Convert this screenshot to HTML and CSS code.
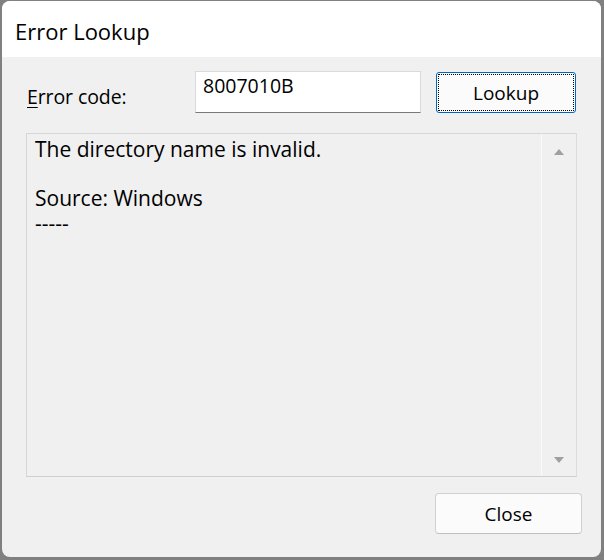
FILE: index.html
```html
<!DOCTYPE html>
<html>
<head>
<meta charset="utf-8">
<link rel="stylesheet" href="styles.css">
</head>
<body>
<div class="window">
  <div class="titlebar">Error Lookup</div>
  <div class="content">
    <div class="row">
      <label class="label"><u>E</u>rror code:</label>
      <div class="input">8007010B</div>
      <button class="btn btn-lookup"><span class="focus">Lookup</span></button>
    </div>
    <div class="output">
      <div class="text">
        <div class="line">The directory name is invalid.</div>
        <div class="line"></div>
        <div class="line">Source: Windows</div>
        <div class="line">-----</div>
      </div>
      <div class="scrollbar">
        <svg class="arrow" width="12" height="8" viewBox="0 0 12 8"><path d="M6 1 L11 7 L1 7 Z" fill="#a0a0a0"/></svg>
        <svg class="arrow" width="12" height="8" viewBox="0 0 12 8"><path d="M1 1 L11 1 L6 7 Z" fill="#a0a0a0"/></svg>
      </div>
    </div>
    <div class="footer">
      <button class="btn btn-close">Close</button>
    </div>
  </div>
</div>
</body>
</html>
```

FILE: styles.css
```css
html, body {
  margin: 0;
  padding: 0;
  background: #808080;
  width: 604px;
  height: 560px;
  overflow: hidden;
}
body {
  padding: 1px 3px 3px 2px;
  box-sizing: border-box;
  font-family: "Open Sans", "Noto Sans", sans-serif;
  color: #000;
}
.window {
  width: 599px;
  height: 556px;
  border-radius: 8px;
  background: #f0f0f0;
  overflow: hidden;
  display: flex;
  flex-direction: column;
}
.titlebar {
  height: 56px;
  background: #fff;
  font-size: 22px;
  padding-left: 13px;
  display: flex;
  align-items: center;
  box-sizing: border-box;
  padding-top: 3px;
}
.content {
  flex: 1;
  display: flex;
  flex-direction: column;
  padding: 14px 24px 0 24px;
}
.row {
  display: flex;
  align-items: flex-start;
  height: 43px;
}
.label {
  font-size: 19.5px;
  width: 168px;
  padding-left: 1px;
  margin-top: 12px;
  letter-spacing: -0.1px;
}
.label u {
  text-decoration-thickness: 1px;
  text-underline-offset: 3px;
}
.input {
  width: 226px;
  height: 42px;
  box-sizing: border-box;
  background: #fff;
  border: 1px solid #dadada;
  border-bottom: 1px solid #7a7a7a;
  font-size: 19.5px;
  padding: 2px 0 0 7px;
  line-height: 24px;
}
.btn {
  font-family: inherit;
  font-size: 19px;
  background: #fbfbfb;
  color: #000;
  box-sizing: border-box;
  padding: 0;
  cursor: default;
}
.btn-lookup {
  margin-left: 15px;
  margin-top: 1px;
  width: 140px;
  height: 41px;
  border: 1px solid #0067c0;
  border-radius: 3px;
  padding: 1px;
}
.focus {
  display: flex;
  align-items: center;
  justify-content: center;
  width: 100%;
  height: 100%;
  box-sizing: border-box;
  border: 1px dotted #000;
}
.output {
  margin-top: 19px;
  height: 344px;
  box-sizing: border-box;
  border: 1px solid #d6d6d6;
  border-right-color: #dcdcdc;
  border-bottom-color: #cfcfcf;
  display: flex;
  background: #f0f0f0;
}
.text {
  flex: 1;
  font-size: 21px;
  padding: 3px 0 0 8px;
}
.line {
  height: 24.5px;
  line-height: 24.5px;
}
.scrollbar {
  width: 34px;
  border-left: 1px solid #fafafa;
  display: flex;
  flex-direction: column;
  justify-content: space-between;
  align-items: center;
  padding: 14px 0 12px 0;
}
.arrow {
  display: block;
}
.footer {
  display: flex;
  justify-content: flex-end;
  margin-top: 16px;
  margin-right: -5px;
}
.btn-close {
  width: 147px;
  height: 41px;
  border: 1px solid #d0d0d0;
  border-bottom-color: #bfbfbf;
  border-radius: 4px;
}
```
